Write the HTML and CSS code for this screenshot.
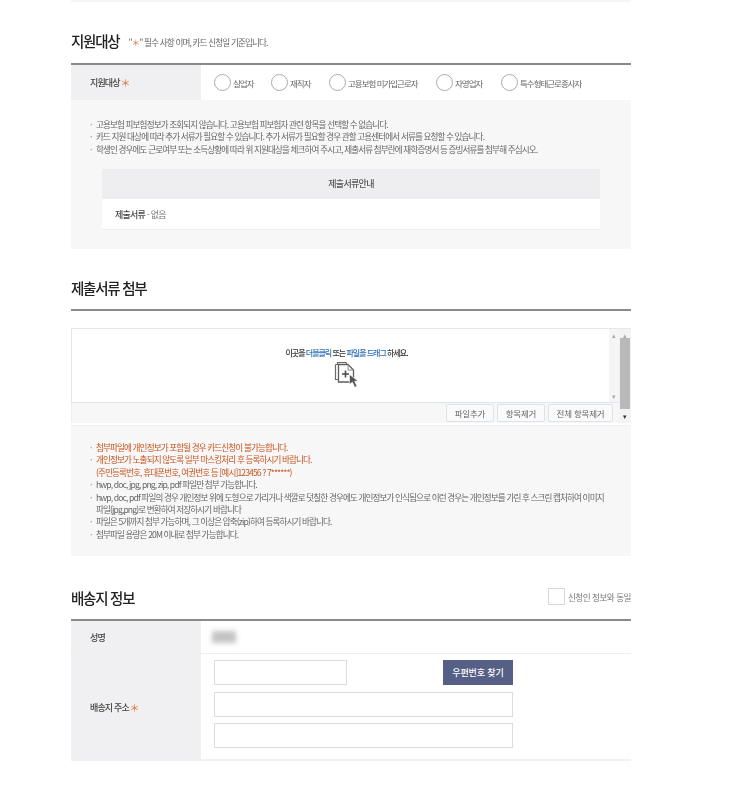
FILE: index.html
```html
<!DOCTYPE html>
<html lang="ko">
<head>
<meta charset="utf-8">
<title>카드 신청</title>
<link rel="stylesheet" href="styles.css">
</head>
<body>
<div class="topline"></div>
<main class="wrap">
  <section class="sec-target">
    <div class="head head-target">
      <h2>지원대상</h2>
      <p class="head-note">"<span class="star">＊</span>" 필수 사항 이며, 카드 신청일 기준입니다.</p>
    </div>
    <div class="row row-radio line-top">
      <div class="th">지원대상 <span class="star star-lg">＊</span></div>
      <div class="radios">
        <label class="radio r1"><i></i>실업자</label>
        <label class="radio r2"><i></i>재직자</label>
        <label class="radio r3"><i></i>고용보험 미가입근로자</label>
        <label class="radio r4"><i></i>자영업자</label>
        <label class="radio r5"><i></i>특수형태근로종사자</label>
      </div>
    </div>
    <div class="info info-target">
      <ul class="notes">
        <li>고용보험 피보험정보가 조회되지 않습니다. 고용보험 피보험자 관련 항목을 선택할 수 없습니다.</li>
        <li>카드 지원 대상에 따라 추가 서류가 필요할 수 있습니다. 추가 서류가 필요할 경우 관할 고용센터에서 서류를 요청할 수 있습니다.</li>
        <li>학생인 경우에도 근로여부 또는 소득상황에 따라 위 지원대상을 체크하여 주시고, 제출서류 첨부란에 재학증명서 등 증빙서류를 첨부해 주십시오.</li>
      </ul>
      <div class="docs">
        <div class="docs-head">제출서류안내</div>
        <div class="docs-body"><b>제출서류</b> - 없음</div>
      </div>
    </div>
  </section>

  <section class="sec-attach">
    <div class="head head-attach"><h2>제출서류 첨부</h2></div>
    <div class="rule"></div>
    <div class="uploader">
      <div class="up-main">
        <div class="drop">
          <div class="drop-center">
            <p class="drop-text">이곳을 <span class="link">더블클릭</span> 또는 <span class="link">파일을 드래그</span> 하세요.</p>
            <svg class="drop-icon" width="26" height="27" viewBox="0 0 26 27" fill="none">
              <path d="M1.5 3.5V18.5H5" stroke="#6a6a6a" stroke-width="1.2"/>
              <path d="M1.5 3.5 H3.5 V1.5 H12 L12.5 3" stroke="#6a6a6a" stroke-width="1.2"/>
              <path d="M4.5 3.5H14L19.5 9V21H4.5Z" fill="#fff" stroke="#5e5e5e" stroke-width="1.3"/>
              <path d="M14 3.5V9H19.5" stroke="#8a8a8a" stroke-width="1"/>
              <path d="M11.5 9.5V16.5M8 13H15" stroke="#4a4a4a" stroke-width="1.6"/>
              <path d="M15.5 13.5 L15.5 23.5 L18.3 21 L20.8 26.2 L23 25.2 L20.6 20.2 L24.2 20 Z" fill="#555" stroke="#fff" stroke-width=".6"/>
            </svg>
          </div>
          <div class="mini-bar"><span class="arr">▴</span><span class="arr">▾</span></div>
        </div>
        <div class="up-btns">
          <button class="btn" type="button">파일추가</button>
          <button class="btn" type="button">항목제거</button>
          <button class="btn btn-wide" type="button">전체 항목제거</button>
        </div>
      </div>
      <div class="big-bar">
        <span class="arr arr-top">▴</span>
        <div class="thumb"></div>
        <span class="arr arr-dark">▾</span>
      </div>
    </div>
    <div class="info info-attach">
      <ul class="notes">
        <li class="warn">첨부파일에 개인정보가 포함될 경우 카드신청이 불가능합니다.</li>
        <li class="warn">개인정보가 노출되지 않도록 일부 마스킹처리 후 등록하시기 바랍니다.<br>(주민등록번호, 휴대폰번호, 여권번호 등 [예시]123456 ? 7******)</li>
        <li>hwp, doc, jpg, png, zip, pdf 파일만 첨부 가능합니다.</li>
        <li>hwp, doc, pdf 파일의 경우 개인정보 위에 도형으로 가리거나 색깔로 덧칠한 경우에도 개인정보가 인식됨으로 이런 경우는 개인정보를 가린 후 스크린 캡처하여 이미지 파일(jpg,png)로 변환하여 저장하시기 바랍니다</li>
        <li>파일은 5개까지 첨부 가능하며, 그 이상은 압축(zip)하여 등록하시기 바랍니다.</li>
        <li>첨부파일 용량은 20M 이내로 첨부 가능합니다.</li>
      </ul>
    </div>
  </section>

  <section class="sec-ship">
    <div class="head head-ship">
      <h2>배송지 정보</h2>
      <label class="same"><i></i>신청인 정보와 동일</label>
    </div>
    <div class="line-top">
      <div class="row row-name">
        <div class="th">성명</div>
        <div class="td"><span class="blurred"></span></div>
      </div>
      <div class="row row-addr">
        <div class="th th-addr">배송지 주소 <span class="star star-lg">＊</span></div>
        <div class="td addr">
          <div class="addr-line">
            <input class="field field-zip" type="text" aria-label="우편번호">
            <button class="zip-btn" type="button">우편번호 찾기</button>
          </div>
          <input class="field" type="text" aria-label="주소">
          <input class="field field-last" type="text" aria-label="상세주소">
        </div>
      </div>
    </div>
  </section>
</main>
</body>
</html>
```
FILE: styles.css
```css
* { box-sizing: border-box; }
html, body { margin: 0; padding: 0; background: #fff; }
body {
  font-family: "Noto Sans CJK KR", "Noto Sans", sans-serif;
  color: #555;
  font-size: 9px;
  height: 791px;
  overflow: hidden;
}
.topline { height: 2px; width: 560px; margin-left: 71px; background: #f5f5f5; }
.wrap { width: 560px; margin-left: 71px; filter: blur(.35px); }
h2 { margin: 0; font-weight: 500; font-size: 14.5px; line-height: 20px; color: #222; letter-spacing: -1.25px; }
p, ul { margin: 0; padding: 0; }
ul { list-style: none; }

.head { display: flex; }
.head-target { height: 61px; padding-top: 29px; align-items: flex-start; gap: 9px; }
.head-note { font-size: 8.6px; line-height: 20px; letter-spacing: -.86px; color: #666; padding-top: 1px; }
.star { color: #e0733f; font-weight: 400; }
.star-lg { font-size: 10px; line-height: 10px; margin-left: -1px; }

.line-top { border-top: 2px solid #8a8a8a; }
.row { display: flex; }
.th { width: 130px; flex: none; background: #f0f0f2; padding-left: 19px; display: flex; align-items: center; font-size: 9px; font-weight: 500; color: #444; letter-spacing: -.85px; white-space: pre; }
.th-addr { padding-top: 2px; }
.row-radio { height: 37px; }
.radios { flex: 1; display: flex; align-items: center; padding-left: 13px; }
.radio { display: flex; align-items: center; gap: 2px; font-size: 8.5px; line-height: 14px; letter-spacing: -1px; color: #666; }
.radio i { width: 17px; height: 17px; border: 1px solid #aaa; border-radius: 50%; background: #fff; }
.r1 { width: 57px; } .r2 { width: 58px; } .r3 { width: 107px; } .r4 { width: 65px; }

.info { background: #f7f7f7; }
.info-target { height: 149px; padding: 18px 19px 0; }
.notes { font-size: 8.6px; line-height: 12.4px; letter-spacing: -.89px; color: #666; }
.notes li { padding-left: 6px; position: relative; }
.notes li::before { content: "·"; position: absolute; left: 0; top: 0; color: #888; }
.notes .warn { color: #c8531f; }
.docs { margin: 14px 12px 0; }
.docs-head { height: 30px; background: #eeeef0; text-align: center; line-height: 29px; font-weight: 500; color: #555; letter-spacing: -.7px; }
.docs-body { height: 31px; background: #fff; padding-left: 13px; line-height: 31px; color: #777; border-bottom: 1px solid #efefef; letter-spacing: -.8px; }
.docs-body b { font-weight: 500; color: #444; }

.head-attach { height: 60px; padding-top: 29px; }
.rule { height: 2px; background: #8a8a8a; }
.uploader { margin-top: 17px; display: flex; height: 97px; border-top: 1px solid #e4e8ee; background: #fff; }
.up-main { width: 548px; display: flex; flex-direction: column; }
.drop { height: 74px; display: flex; border-left: 1px solid #e4e8ee; border-bottom: 1px solid #dfe5ec; }
.drop-center { flex: 1; display: flex; flex-direction: column; align-items: center; padding-top: 18px; padding-left: 12px; }
.drop-text { font-size: 8px; line-height: 11px; letter-spacing: -1px; color: #333; font-weight: 500; }
.link { color: #2a6fb5; }
.drop-icon { margin-top: 3px; }
.mini-bar { width: 10px; background: #f5f5f5; display: flex; flex-direction: column; justify-content: space-between; align-items: center; padding: 2px 0; }
.arr { font-size: 7px; line-height: 8px; color: #aaa; }
.up-btns { height: 20px; background: #f7f7f7; display: flex; justify-content: flex-end; gap: 3px; padding-right: 6px; border-left: 1px solid #eee; align-items: flex-start; padding-top: 1px; }
.btn { height: 18px; padding: 0; width: 48px; border: 1px solid #dde3ea; border-radius: 2px; background: #fafafa; font: inherit; font-size: 8.5px; color: #666; letter-spacing: -.2px; }
.btn-wide { width: 65px; }
.big-bar { width: 12px; margin-left: auto; background: #f3f3f3; display: flex; flex-direction: column; align-items: center; height: 94px; }
.arr-top { height: 9px; display: block; padding-top: 2px; }
.thumb { width: 10px; height: 71px; background: #b9b9b9; }
.arr-dark { color: #333; margin-top: 3px; }
.info-attach { height: 131px; padding: 15px 19px 0; border-top: 1px solid #eef0f2; }

.head-ship { height: 63px; padding-top: 32px; justify-content: space-between; align-items: flex-start; }
.same { display: flex; align-items: center; gap: 3px; font-size: 8.6px; letter-spacing: -.5px; color: #777; }
.same i { width: 17px; height: 17px; border: 1px solid #d8d8d8; background: #fff; }
.row-name { height: 33px; border-bottom: 1px solid #eee; }
.td { flex: 1; padding-left: 11px; display: flex; align-items: center; }
.blurred { width: 24px; height: 12px; background: #aaa; filter: blur(2.5px); opacity: .7; }
.row-addr { height: 107px; border-bottom: 2px solid #f0f0f0; }
.addr { flex-direction: column; align-items: flex-start; padding: 6px 0 0 13px; gap: 7px; }
.addr-line { width: 299px; display: flex; justify-content: space-between; }
.field { display: block; width: 299px; height: 25px; border: 1px solid #dcdcdc; background: #fff; padding: 0; margin: 0; }
.field-zip { width: 133px; }
.field-last { margin-top: -1px; }
.zip-btn { width: 70px; height: 25px; border: 0; padding: 0; background: #565f85; color: #fff; font: inherit; font-size: 9px; font-weight: 500; letter-spacing: -.1px; }
```
